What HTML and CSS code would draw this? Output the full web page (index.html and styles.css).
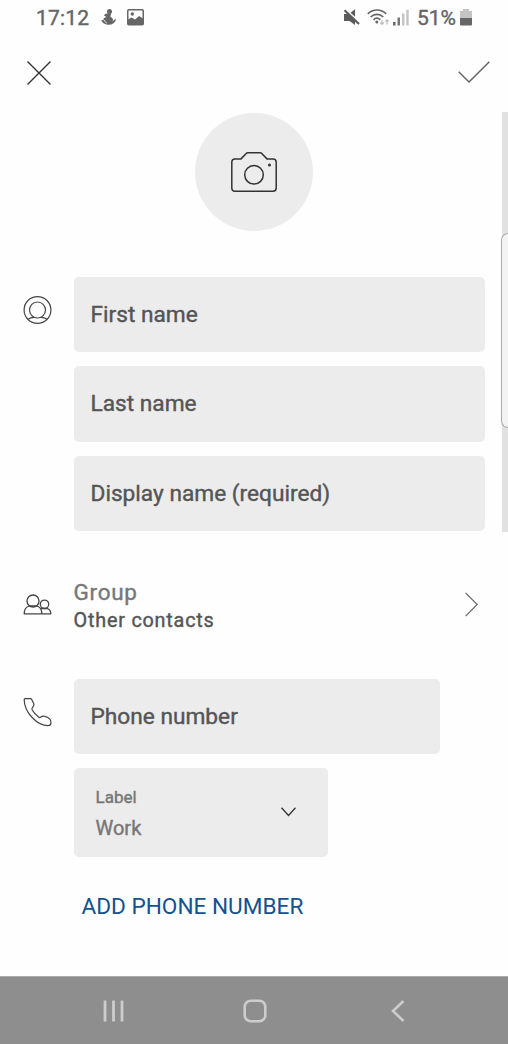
FILE: index.html
```html
<!DOCTYPE html>
<html lang="en">
<head>
    <meta charset="UTF-8">
    <meta name="viewport" content="width=device-width, initial-scale=1.0">
    <title>New contact</title>
    <link rel="stylesheet" href="styles.css">
</head>
<body>
    <div class="status-bar">
        <span class="clock">17:12</span>
        <svg class="notif" width="15" height="17" viewBox="0 0 15 17">
            <circle cx="8.500" cy="2.600" r="2.500" fill="#666"/>
            <path d="M3 6.500C4 4.500 6 4 10 4.500L9.500 8c3 1 3 4 1.500 5l3.200-3 .8.800C13.500 15 9.500 16.500 5.500 15.500 2.500 15 .8 13 .3 11c1 0 1.500 0 2 .5C2.500 9.500 3 8.500 5.500 8z" fill="#666"/>
            <path d="M3.500 11c.3 1.800 1.200 2.800 2.500 3" fill="none" stroke="#ddd" stroke-width="1"/>
        </svg>
        <svg class="picture" width="17" height="17" viewBox="0 0 17 17">
            <rect x=".75" y=".75" width="15.500" height="15" rx="1" fill="none" stroke="#666" stroke-width="1.500"/>
            <path d="M1 10.500l3.500-2L8 10.500l4-3.500 4 2.500v6H1z" fill="#666"/>
            <circle cx="5.300" cy="5" r="1.700" fill="#666"/>
        </svg>
        <svg class="mute" width="17" height="17" viewBox="0 0 17 17">
            <path d="M1 5h5l6 6v5L6.500 12H1zM7.500 3.800L12 .3V7.800z" fill="#5c5c5c"/>
            <path d="M1.500 1.200L16 15" stroke="#5c5c5c" stroke-width="2.200"/>
        </svg>
        <svg class="wifi" width="23" height="17" viewBox="0 0 23 17">
            <g fill="none" stroke="#666" stroke-width="1.700">
                <path d="M.8 4.800C6-.3 14-.3 19.200 4.800"/>
                <path d="M3.600 8c3.700-3.600 9-3.600 12.700 0"/>
                <path d="M6.500 10.800c2-1.900 4.800-1.900 6.800 0"/>
            </g>
            <circle cx="9.800" cy="13" r="1.500" fill="#666"/>
            <path d="M15 11v4M13.400 13.500L15 15.300l1.600-1.800M20 15.500v-4M18.400 12.700L20 10.900l1.600 1.800" fill="none" stroke="#bbb" stroke-width="1.200"/>
        </svg>
        <svg class="signal" width="17" height="17" viewBox="0 0 17 17">
            <rect x="0" y="13" width="2.500" height="3.500" fill="#666"/>
            <rect x="4.500" y="8.500" width="2.500" height="8" fill="#777"/>
            <rect x="9" y="4.500" width="2.400" height="12" fill="#c4c4c4"/>
            <rect x="13.300" y=".8" width="2.400" height="15.700" fill="#c4c4c4"/>
        </svg>
        <span class="percent">51%</span>
        <svg class="battery" width="12" height="17" viewBox="0 0 12 17">
            <path d="M3 0h6v2h3v7H0V2h3z" fill="#c4c4c4"/>
            <path d="M0 9h12v6.500a1 1 0 0 1-1 1H1a1 1 0 0 1-1-1z" fill="#666"/>
        </svg>
    </div>

    <div class="top-bar">
        <svg width="24" height="24" viewBox="0 0 24 24">
            <path d="M.5.5l23 23M23.500.5l-23 23" stroke="#333" stroke-width="1.400"/>
        </svg>
        <svg width="32" height="22" viewBox="0 0 32 22">
            <path d="M.7 10.800L11 21 31.300.7" fill="none" stroke="#606060" stroke-width="1.400"/>
        </svg>
    </div>

    <div class="content">
        <div class="photo">
            <svg width="46" height="40" viewBox="0 0 46 40">
                <g fill="none" stroke="#333" stroke-width="1.500" stroke-linejoin="round">
                    <path d="M4 6.900H10L15.500 1.300q.5-.5 1.200-.5H29.300q.7 0 1.200.5L36 6.900h6q3.200 0 3.200 3.200V36q0 3.200-3.200 3.200H4Q.8 39.200.8 36V10.100Q.8 6.900 4 6.900z"/>
                    <circle cx="23" cy="22.800" r="9.300"/>
                </g>
                <circle cx="38.500" cy="13" r="1.500" fill="#333"/>
            </svg>
        </div>

        <div class="row names">
            <svg class="row-icon" width="28" height="28" viewBox="0 0 28 28">
                <g fill="none" stroke="#444" stroke-width="1.200">
                    <circle cx="14" cy="14" r="13.400"/>
                    <circle cx="14" cy="14" r="8"/>
                    <path d="M4.500 23.300c1.800-1.300 4-1.900 6-2M23.500 23.300c-1.800-1.300-4-1.900-6-2"/>
                </g>
            </svg>
            <div class="fields">
                <div class="field first">First name</div>
                <div class="field last">Last name</div>
                <div class="field display">Display name (required)</div>
            </div>
        </div>

        <div class="row group">
            <svg class="row-icon" width="28" height="21" viewBox="0 0 28 21">
                <g fill="none" stroke="#444" stroke-width="1.300" stroke-linejoin="round">
                    <circle cx="9.500" cy="7" r="6"/>
                    <circle cx="21" cy="10.300" r="4.200"/>
                    <path d="M5.500 12c-3 1-4.800 3.500-4.800 7.800h17.600c0-4-1.700-6.800-4.700-7.800M16.800 14.500h7c2.200.7 3.500 2.600 3.500 5.300h-9M5.500 12h8"/>
                </g>
            </svg>
            <div class="group-text">
                <div class="group-title">Group</div>
                <div class="group-value">Other contacts</div>
            </div>
            <svg class="chevron" width="13" height="25" viewBox="0 0 13 25">
                <path d="M.6.8L12.200 12.500.6 24.200" fill="none" stroke="#666" stroke-width="1.200"/>
            </svg>
        </div>

        <div class="row phone">
            <svg class="row-icon" width="28" height="29" viewBox="0 0 28 29">
                <path d="M1.500.7H7q.8 0 1.200.8l2 4q.5 1.200-.1 2.200L8.600 10.300q-.3.700 0 1.500c1.500 3 4.200 5.700 7.200 7.600q.6.400 1.200-.1c1.200-1 2.800-1.500 4.300-1 2 .5 4 1.500 5.300 3 .9 1 .8 2.500.8 3.700q0 2.700-3 2.700C14 27.700.7 14.500.7 1.700q0-1 .8-1z" fill="none" stroke="#444" stroke-width="1.200" stroke-linejoin="round"/>
            </svg>
            <div class="fields">
                <div class="field number">Phone number</div>
                <div class="select">
                    <div class="select-text">
                        <div class="select-label">Label</div>
                        <div class="select-value">Work</div>
                    </div>
                    <svg width="15" height="10" viewBox="0 0 15 10">
                        <path d="M.5.8L7.500 8.500 14.500.8" fill="none" stroke="#333" stroke-width="1.300"/>
                    </svg>
                </div>
                <div class="add">ADD PHONE NUMBER</div>
            </div>
        </div>
    </div>

    <div class="nav-bar">
        <svg width="22" height="22" viewBox="0 0 22 22">
            <path d="M2 .5v21M10.500.5v21M19 .5v21" stroke="#ccc" stroke-width="2.800"/>
        </svg>
        <svg class="home" width="24" height="24" viewBox="0 0 24 24">
            <rect x="1.700" y="1.700" width="20.600" height="20.600" rx="6" fill="none" stroke="#ccc" stroke-width="2.600"/>
        </svg>
        <svg width="14" height="22" viewBox="0 0 14 22">
            <path d="M12.500 1L2 11l10.500 10" fill="none" stroke="#ccc" stroke-width="2.600"/>
        </svg>
    </div>

    <!-- edge panel over the right side of the screen -->
    <div class="edge-track">
        <div class="edge-handle"></div>
    </div>
</body>
</html>
```
FILE: styles.css
```css
* {
    box-sizing: border-box;
}
body {
    font-family: Roboto, "Liberation Sans", sans-serif;
    font-weight: 400;
    -webkit-text-stroke: 0.4px currentColor;
    margin: 0;
    width: 508px;
    height: 1044px;
    position: relative;
    overflow: hidden;
    display: flex;
    flex-direction: column;
    background-color: #fefefe;
    color: #555;
}
svg {
    display: block;
    flex-shrink: 0;
}
.status-bar {
    height: 36px;
    padding: 0 36px 2px 36px;
    display: flex;
    align-items: center;
    font-size: 21px;
    line-height: 24px;
    color: #666;
}
.clock {
    width: 54px;
    padding-top: 1px;
    letter-spacing: 0.2px;
}
.percent {
    width: 39px;
    padding-top: 1px;
    margin-left: 7px;
}
.picture {
    margin-left: 11px;
}
.notif {
    margin-left: 11px;
}
.mute {
    margin-left: auto;
}
.wifi {
    margin-left: 7px;
}
.signal {
    margin-left: 3px;
}
.battery {
    margin-left: 4px;
}
.top-bar {
    height: 76px;
    padding: 25px 18px 0 27px;
    display: flex;
    justify-content: space-between;
}
.content {
    flex: 1;
}
.photo {
    width: 118px;
    height: 118px;
    margin: 1px auto 45.500px;
    border-radius: 50%;
    background-color: #ececec;
    display: flex;
    align-items: center;
    justify-content: center;
}
.row {
    display: flex;
    padding-left: 22.500px;
}
.row-icon {
    width: 29px;
    margin-right: 22px;
}
.names .row-icon {
    margin-top: 19.500px;
}
.fields {
    display: flex;
    flex-direction: column;
    gap: 14px;
}
.field {
    width: 411.500px;
    height: 75.500px;
    padding-left: 17px;
    border-radius: 5px;
    background-color: #ececec;
    font-size: 22.700px;
    line-height: 75px;
}
.group {
    margin-top: 47.500px;
    height: 100px;
    padding-right: 30px;
}
.group .row-icon {
    margin-top: 15px;
}
.group-text {
    flex: 1;
}
.group-title {
    font-size: 22.500px;
    line-height: 27px;
    letter-spacing: 0.7px;
    color: #777;
}
.group-value {
    font-size: 19.800px;
    line-height: 29px;
    letter-spacing: 0.8px;
}
.chevron {
    margin-top: 13px;
}
.phone .row-icon {
    margin-top: 19.500px;
}
.number {
    width: 366px;
}
.select {
    width: 254px;
    height: 89px;
    padding: 0 32px 0 22px;
    border-radius: 5px;
    background-color: #ececec;
    display: flex;
    align-items: center;
    justify-content: space-between;
    color: #777;
}
.select svg {
    margin-bottom: 2px;
}
.select-text {
    padding-top: 3px;
}
.select-label {
    font-size: 17px;
    line-height: 28px;
}
.select-value {
    font-size: 20px;
    line-height: 34px;
}
.add {
    margin: 22px 0 0 8px;
    font-size: 22.600px;
    line-height: 28px;
    -webkit-text-stroke: 0;
    color: #15528f;
}
.nav-bar {
    height: 68px;
    padding: 0 103px;
    border-top: 1px solid #aaa;
    background-color: #8e8e8e;
    display: flex;
    align-items: center;
    justify-content: space-between;
}
.home {
    margin-right: 6px;
}
.edge-track {
    position: absolute;
    top: 112px;
    right: 0;
    width: 6px;
    height: 420px;
    background-color: #e1e1e1;
}
.edge-handle {
    position: absolute;
    top: 121px;
    left: -1px;
    width: 7px;
    height: 195px;
    border: 1px solid #aaa;
    border-right: none;
    border-radius: 7px 0 0 7px;
    background-color: #f3f3f3;
}
```
